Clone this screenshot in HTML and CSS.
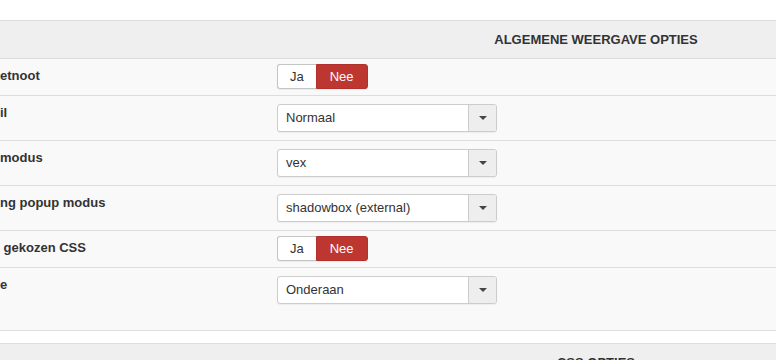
FILE: index.html
```html
<!DOCTYPE html>
<html>
	<head>
		<meta charset="UTF-8">
		<title>Weergave opties</title>
		<link rel="stylesheet" href="styles.css">
	</head>
	<body>
		<div class="options">
			<div class="head">Algemene weergave opties</div>
			<div class="row">
				<div class="label">etnoot</div>
				<div class="control short">
					<div class="toggle"><span class="btn">Ja</span><span class="btn on">Nee</span></div>
				</div>
			</div>
			<div class="row">
				<div class="label">il</div>
				<div class="control">
					<div class="select"><span class="value">Normaal</span><span class="arrow"><i></i></span></div>
				</div>
			</div>
			<div class="row">
				<div class="label">modus</div>
				<div class="control">
					<div class="select"><span class="value">vex</span><span class="arrow"><i></i></span></div>
				</div>
			</div>
			<div class="row">
				<div class="label">ng popup modus</div>
				<div class="control">
					<div class="select"><span class="value">shadowbox (external)</span><span class="arrow"><i></i></span></div>
				</div>
			</div>
			<div class="row">
				<div class="label">&nbsp;gekozen CSS</div>
				<div class="control short">
					<div class="toggle"><span class="btn">Ja</span><span class="btn on">Nee</span></div>
				</div>
			</div>
			<div class="row">
				<div class="label">e</div>
				<div class="control tall">
					<div class="select"><span class="value">Onderaan</span><span class="arrow"><i></i></span></div>
				</div>
			</div>
		</div>
		<div class="options next">
			<div class="head">CSS opties</div>
		</div>
	</body>
</html>
```

FILE: styles.css
```css
*{
	margin: 0;
	padding: 0;
	box-sizing: border-box;
}
html,body{
	overflow: hidden;
}
body{
	background: #fff;
	font-family: "Liberation Sans", Arial, sans-serif;
	font-size: 13px;
	color: #333;
}
.options{
	margin-top: 20px;
}
.options.next{
	margin-top: 12px;
}
.head{
	height: 39px;
	padding-left: 416px;
	border-top: 1px solid #ddd;
	border-bottom: 1px solid #ddd;
	background: #efefef;
	text-align: center;
	text-transform: uppercase;
	font-weight: bold;
	line-height: 37px;
	color: #333;
}
.row{
	display: flex;
	background: #f9f9f9;
	border-bottom: 1px solid #ddd;
}
.label{
	width: 277px;
	padding-top: 8px;
	font-weight: bold;
	line-height: 18px;
	white-space: nowrap;
}
.control{
	padding: 8px 0;
}
.control.short{
	padding: 5px 0 6px;
}
.control.tall{
	padding: 8px 0 26px;
}
.toggle{
	display: flex;
	height: 25px;
}
.toggle .btn{
	display: block;
	padding: 0 12px;
	line-height: 23px;
	background: #fff;
	border: 1px solid #c4c4c4;
	border-right: 0;
	border-radius: 3px 0 0 3px;
	box-shadow: 0 1px 1px rgba(0,0,0,0.06);
}
.toggle .btn.on{
	padding: 0 13px;
	background: #bd362f;
	border: 1px solid #b1322c;
	border-radius: 0 3px 3px 0;
	color: #fff;
}
.select{
	display: flex;
	width: 220px;
	height: 28px;
	background: #fff;
	border: 1px solid #ccc;
	border-radius: 3px;
	box-shadow: 0 1px 1px rgba(0,0,0,0.05);
}
.select .value{
	flex: 1;
	padding-left: 8px;
	line-height: 26px;
}
.select .arrow{
	display: flex;
	align-items: center;
	justify-content: center;
	width: 28px;
	background: #eee;
	border-left: 1px solid #ccc;
	border-radius: 0 3px 3px 0;
}
.select .arrow i{
	display: block;
	width: 0;
	height: 0;
	border-top: 4px solid #444;
	border-left: 4px solid transparent;
	border-right: 4px solid transparent;
}
```
